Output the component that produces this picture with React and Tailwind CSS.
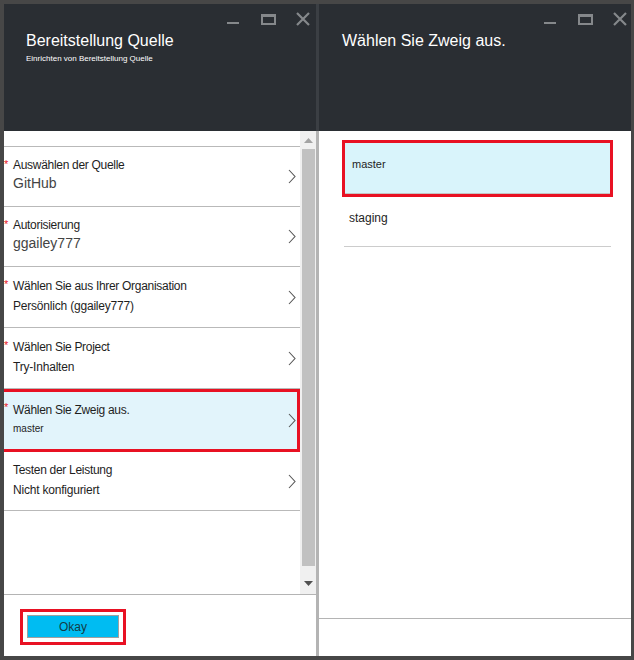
import React from 'react';

const FONT = { fontFamily: '"Liberation Sans", Arial, sans-serif' };

// Window buttons in the blade header
function WindowControls({ className = '' }) {
  return (
    <div className={`flex items-start ${className}`}>
      <svg width="13" height="14" viewBox="0 0 13 14" className="mt-[4px]">
        <rect x="0" y="10" width="12" height="2" fill="#85888b" />
      </svg>
      <svg width="15" height="12" viewBox="0 0 15 12" className="ml-[21px] mt-[6px]">
        <rect x="1" y="1" width="13" height="9" fill="none" stroke="#85888b" strokeWidth="2" />
        <rect x="0" y="0" width="15" height="3" fill="#85888b" />
      </svg>
      <svg width="14" height="14" viewBox="0 0 14 14" className="ml-[20px] mt-[4px]">
        <path d="M1 1 L13 13 M13 1 L1 13" stroke="#85888b" strokeWidth="2.2" />
      </svg>
    </div>
  );
}

function Chevron() {
  return (
    <svg width="8" height="15" viewBox="0 0 8 15" className="shrink-0">
      <path d="M1 1 L7 7.5 L1 14" fill="none" stroke="#555" strokeWidth="1.1" />
    </svg>
  );
}

const rows = [
  { label: 'Auswählen der Quelle', value: 'GitHub', req: true, big: true, h: 'h-[60px]' },
  { label: 'Autorisierung', value: 'ggailey777', req: true, big: true, h: 'h-[60px]' },
  { label: 'Wählen Sie aus Ihrer Organisation', value: 'Persönlich (ggailey777)', req: true, h: 'h-[61px]' },
  { label: 'Wählen Sie Project', value: 'Try-Inhalten', req: true, h: 'h-[61px]' },
  { label: 'Wählen Sie Zweig aus.', value: 'master', req: true, small: true, active: true, h: 'h-[63px]' },
  { label: 'Testen der Leistung', value: 'Nicht konfiguriert', req: false, h: 'h-[59px]' },
];

function Row({ row }) {
  // the selected row's red frame runs off the left edge of the blade
  const frame = row.active
    ? 'border-[3px] border-l-0 border-[#e81123] bg-[#e2f4fb]'
    : 'border-b border-[#b9b9b9]';
  return (
    <div className={`relative flex items-center ${row.h} ${frame}`}>
      {row.req && (
        <span className={`absolute left-0 text-[11px] leading-none text-[#e81123] ${row.active ? 'top-[10px]' : 'top-[12px]'}`}>*</span>
      )}
      <div className={`flex-1 flex flex-col pb-[3px] pl-[9px] ${row.big ? 'gap-[2px]' : 'gap-[6px]'}`}>
        <span className="text-[12px] leading-[14px] text-[#1e1e1e] tracking-[-0.3px]">{row.label}</span>
        {row.big && <span className="text-[14px] leading-[18px] text-[#444]">{row.value}</span>}
        {!row.big && !row.small && <span className="text-[12px] leading-[14px] text-[#1e1e1e] tracking-[-0.2px]">{row.value}</span>}
        {row.small && <span className="text-[10px] leading-[12px] text-[#1e1e1e]">{row.value}</span>}
      </div>
      <div className={row.active ? 'pr-[1px]' : 'pr-[4px]'}>
        <Chevron />
      </div>
    </div>
  );
}

function Scrollbar() {
  return (
    <div className="w-[16px] bg-[#f0f0f0] flex flex-col items-center">
      <svg width="9" height="5" viewBox="0 0 9 5" className="mt-[7px]">
        <path d="M0 5 L4.5 0 L9 5 Z" fill="#a3a3a3" />
      </svg>
      <div className="mt-[6px] ml-[1px] w-[13px] h-[417px] bg-[#c1c1c1]" />
      <div className="flex-1" />
      <svg width="9" height="5" viewBox="0 0 9 5" className="mb-[8px]">
        <path d="M0 0 L9 0 L4.5 5 Z" fill="#505050" />
      </svg>
    </div>
  );
}

export default function App() {
  return (
    <div className="w-[634px] h-[660px] bg-[#474747] pt-[4px] pl-[4px] pr-[3px] pb-[4px] flex" style={FONT}>
      {/* Left blade */}
      <div className="w-[315px] flex flex-col">
        <div className="h-[127px] bg-[#2a2e33] border-r-[3px] border-[#3b3f44] relative">
          <WindowControls className="absolute top-[4px] left-[223px]" />
          <div className="pl-[22px] pt-[27px]">
            <div className="text-[16px] leading-[20px] text-white">Bereitstellung Quelle</div>
            <div className="text-[8px] leading-[10px] text-white mt-[3px]">Einrichten von Bereitstellung Quelle</div>
          </div>
        </div>
        <div className="flex-1 bg-white border-r-[3px] border-[#b4b4b4] flex flex-col">
          <div className="h-[464px] flex border-b border-[#b4b4b4]">
            <div className="flex-1 pt-[15px]">
              <div className="border-t border-[#b9b9b9]" />
              {rows.map((r) => (
                <Row key={r.label} row={r} />
              ))}
            </div>
            <Scrollbar />
          </div>
          <div className="flex-1 pl-[16px] pt-[14px]">
            <div className="inline-block border-[3px] border-[#e81123] px-[4px] pt-[3px] pb-[4px]">
              <button className="w-[92px] h-[23px] bg-[#00bcf2] border border-[#a0a0a0] text-[12px] text-[#143c46] flex items-center justify-center">
                Okay
              </button>
            </div>
          </div>
        </div>
      </div>

      {/* Right blade */}
      <div className="flex-1 flex flex-col">
        <div className="h-[127px] bg-[#2a2e33] relative">
          <WindowControls className="absolute top-[4px] left-[225px]" />
          <div className="pl-[23px] pt-[27px] text-[16px] leading-[20px] text-white">Wählen Sie Zweig aus.</div>
        </div>
        <div className="flex-1 bg-white flex flex-col">
          <div className="h-[487px] pt-[9px] pl-[23px] pr-[18px]">
            <div className="h-[57px] border-[3px] border-[#e81123]">
              <div className="h-full bg-[#d9f4fb] border-b border-[#c4c4c4] pl-[7px] pt-[15px] text-[11px] leading-[13px] text-[#1e1e1e]">
                master
              </div>
            </div>
            <div className="mx-[2px] h-[50px] border-b border-[#cccccc] pl-[5px] pt-[14px] text-[12px] leading-[14px] text-[#1e1e1e]">
              staging
            </div>
          </div>
          <div className="flex-1 border-t border-[#b4b4b4]" />
        </div>
      </div>
    </div>
  );
}
